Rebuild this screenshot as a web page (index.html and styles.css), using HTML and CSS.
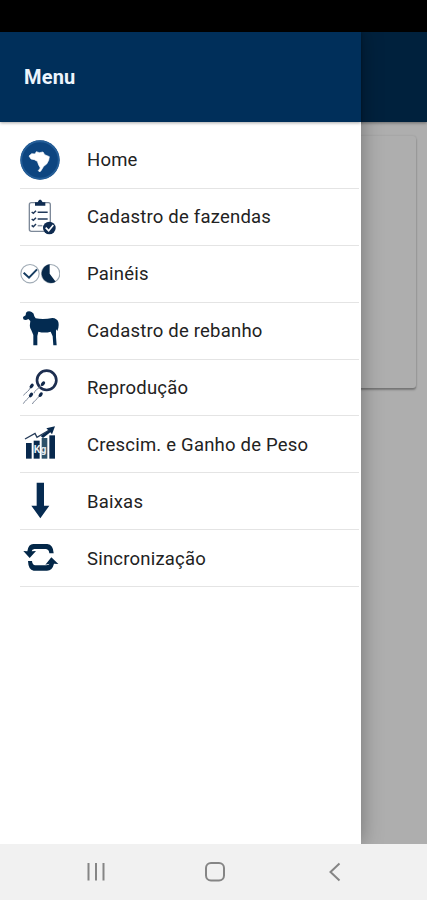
FILE: index.html
```html
<!DOCTYPE html>
<html lang="pt-BR">
<head>
<meta charset="utf-8">
<title>Menu</title>
<link rel="stylesheet" href="styles.css">
</head>
<body>
<div class="phone">
  <div class="status"></div>
  <div class="screen">
    <div class="page">
      <div class="appbar"></div>
      <div class="card"></div>
    </div>
    <nav class="drawer">
      <header class="drawer-header">Menu</header>
      <ul class="menu">
        <li class="item">
          <svg class="icon" viewBox="30 28 120 120"><circle cx="90" cy="88" r="59" fill="#0d4580"/><circle cx="90" cy="88" r="56" fill="none" stroke="#255f99" stroke-width="5"/><path d="M57 76L65 69L75 70L79 63L88 66L99 64L104 72L118 78L116 89L110 100L101 107L93 120L89 124L85 120L91 112L86 103L82 92L73 87L63 85Z" fill="#fff" stroke="#fff" stroke-width="2" stroke-linejoin="round"/></svg>
          <span class="label">Home</span>
        </li>
        <li class="item">
          <svg class="icon" viewBox="30 21 120 120"><rect x="58" y="38" width="63" height="86" rx="6" fill="#fff" stroke="#7d8999" stroke-width="4"/><path d="M75 47V37H83Q90 20 98 37H106V47Z" fill="#0e2b50"/><g fill="none" stroke="#21395a" stroke-width="4.500"><path d="M65 66L70 70L78 62M65 87L70 91L78 83M65 106L70 110L78 102"/><path d="M83 67H113M83 87H113"/><path d="M83 107H97" stroke="#8b96a5"/></g><circle cx="118" cy="114" r="19" fill="#0e2b50"/><path d="M107 113L116 122L130 105" fill="none" stroke="#fff" stroke-width="5"/></svg>
          <span class="label">Cadastro de fazendas</span>
        </li>
        <li class="item">
          <svg class="icon" viewBox="30 18 120 120"><circle cx="60" cy="77" r="27.500" fill="#fff" stroke="#a1acb6" stroke-width="3.500"/><path d="M41 74L57 89L81 64" fill="none" stroke="#173d61" stroke-width="6"/><circle cx="122" cy="77" r="27.500" fill="#fff" stroke="#a1acb6" stroke-width="3.500"/><path d="M119 77V49A28 28 0 1 0 137 101Z" fill="#08294a"/></svg>
          <span class="label">Painéis</span>
        </li>
        <li class="item">
          <svg class="icon" viewBox="30 24 120 120"><path d="M39 42L47 37L48 29Q55 22 65 27Q72 30 73 40L77 46Q100 51 127 45Q141 46 145 57Q148 70 142 84L138 79V102L140 127H130L128 100L122 86Q104 91 85 86L82 99V127H70V96L64 82Q58 74 60 63L61 54L55 48Q47 54 40 49Z" fill="#032b51"/></svg>
          <span class="label">Cadastro de rebanho</span>
        </li>
        <li class="item">
          <svg class="icon" viewBox="30 23 120 120"><circle cx="110" cy="60" r="29" fill="#fff" stroke="#1d2e50" stroke-width="8"/><g fill="none" stroke="#7b8698" stroke-width="3"><path d="M62 81Q57 90 52 94T40 105M96 73Q88 82 80 88T72 99M59 108Q54 115 49 119T40 130M88 107Q82 115 76 120T67 131"/></g><g fill="#10284b"><ellipse cx="65" cy="77" rx="8" ry="5" transform="rotate(-52 65 77)"/><ellipse cx="99" cy="70" rx="8" ry="5" transform="rotate(-48 99 70)"/><ellipse cx="63" cy="104" rx="8" ry="5" transform="rotate(-52 63 104)"/><ellipse cx="92" cy="103" rx="8" ry="5" transform="rotate(-52 92 103)"/></g></svg>
          <span class="label">Reprodução</span>
        </li>
        <li class="item">
          <svg class="icon" viewBox="30 20 120 120"><g fill="#08294d"><path d="M48 77H65V124H48Z"/><path d="M71 70H89V124H71Z"/><path d="M95 62H112V124H95Z" fill="#2d526a"/><path d="M118 54H135V124H118Z"/><path d="M135 27L109 33L115 39L92 56L99 62L121 45L126 51Z"/></g><path d="M45 65L75 48L81 60L118 38" fill="none" stroke="#263c59" stroke-width="4"/><text class="unit" x="71" y="107">Kg</text></svg>
          <span class="label">Crescim. e Ganho de Peso</span>
        </li>
        <li class="item">
          <svg class="icon" viewBox="30 21 120 120"><path d="M80 26H102V95H118L91 133L64 95H80Z" fill="#062b51"/></svg>
          <span class="label">Baixas</span>
        </li>
        <li class="item">
          <svg class="icon" viewBox="30 192 120 120"><g fill="#032748"><path d="M40 231L52 232Q55 210 70 210H112Q130 212 131 238H118Q117 226 108 225H73Q66 226 65 232L78 231L59 252Z"/><path d="M54 261H66Q67 273 76 274H109Q117 273 119 269L106 272L124 250L145 270L132 269Q127 290 111 290H71Q55 288 54 261Z"/></g></svg>
          <span class="label">Sincronização</span>
        </li>
      </ul>
    </nav>
  </div>
  <footer class="navbar">
    <svg class="nav-icon" viewBox="0 0 24 24"><path d="M4.500 3V20.500M12 3V20.500M19.500 3V20.500"/></svg>
    <svg class="nav-icon" viewBox="0 0 24 24"><rect x="3" y="3" width="18" height="17.600" rx="5"/></svg>
    <svg class="nav-icon" viewBox="0 0 24 24"><path d="M16.500 3.500L7.500 12L16.500 20.500"/></svg>
  </footer>
</div>
</body>
</html>
```
FILE: styles.css
```css
* {
  box-sizing: border-box;
}

body {
  margin: 0;
  font-family: Roboto, "Liberation Sans", sans-serif;
}

.phone {
  display: flex;
  flex-direction: column;
  width: 427px;
  height: 900px;
  overflow: hidden;
}

.status {
  height: 32px;
  background: #000;
}

.screen {
  display: grid;
  flex: 1;
  overflow: hidden;
}

.page,
.drawer {
  grid-area: 1 / 1;
}

.page {
  background: #aeaeae;
}

.appbar {
  height: 90px;
  background: #00213d;
  box-shadow: 0 1px 3px rgba(0, 0, 0, 0.4);
}

.card {
  height: 252px;
  margin: 14px 11px 0;
  border-radius: 3px;
  background: #aeaeae;
  box-shadow: 0 2px 2px rgba(0, 0, 0, 0.3), 0 0 2px rgba(0, 0, 0, 0.15);
}

.drawer {
  z-index: 1;
  width: 361px;
  background: #fff;
  box-shadow: 0 0 20px rgba(0, 0, 0, 0.35);
}

.drawer-header {
  display: flex;
  align-items: center;
  height: 90px;
  padding-left: 24px;
  background: #002f5a;
  color: #edf4fc;
  font-size: 20px;
  font-weight: 700;
  letter-spacing: 0.2px;
  box-shadow: 0 1px 3px rgba(0, 0, 0, 0.35);
}

.menu {
  margin: 0;
  padding: 10px 2px 0 20px;
  list-style: none;
}

.item {
  display: flex;
  align-items: center;
  gap: 27px;
  height: 56.9px;
  border-bottom: 1.5px solid #e4e4e4;
  color: #222;
  font-size: 18.5px;
  letter-spacing: 0.21px;
}

.label {
  padding-top: 1px;
}

.icon {
  width: 40px;
  height: 40px;
}

.unit {
  fill: #e7edf2;
  font-size: 31px;
  font-weight: 700;
  letter-spacing: 1px;
}

.navbar {
  display: flex;
  align-items: center;
  gap: 95.5px;
  height: 56px;
  padding-left: 83.5px;
  background: #f1f1f1;
}

.nav-icon {
  width: 24px;
  height: 24px;
  fill: none;
  stroke: #858585;
  stroke-width: 2;
}
```
